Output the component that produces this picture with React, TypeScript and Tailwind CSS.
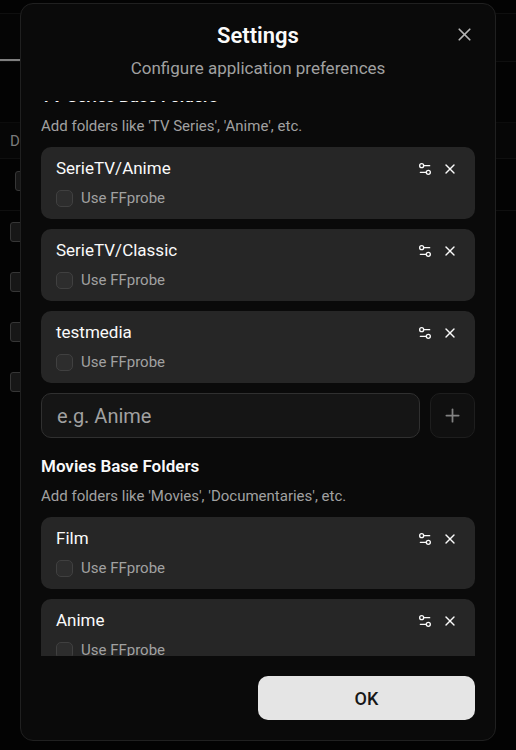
import { useId, useLayoutEffect, useRef } from "react";
import { Plus, Settings2, X } from "lucide-react";

const TV_FOLDERS = ["SerieTV/Anime", "SerieTV/Classic", "testmedia"];
const MOVIE_FOLDERS = ["Film", "Anime"];

function FolderCard({ name }: { name: string }) {
  const id = useId();

  return (
    <div className="rounded-[10px] bg-[#262626] py-[10px] pr-[13px] pl-[15px]">
      <div className="mb-2 flex h-[23px] items-center justify-between">
        <span className="text-[17px] leading-[23px] text-[#fafafa]">{name}</span>
        <div className="flex text-[#fafafa]">
          <button type="button" aria-label={`Configure ${name}`} className="flex size-[25px] items-center justify-center">
            <Settings2 size={16} />
          </button>
          <button type="button" aria-label={`Remove ${name}`} className="flex size-[25px] items-center justify-center">
            <X size={16} />
          </button>
        </div>
      </div>
      <div className="flex items-center gap-2">
        <input
          id={id}
          type="checkbox"
          className="size-[17px] appearance-none rounded-[5px] border border-[#404040] bg-[#2d2d2d] checked:bg-[#e5e5e5]"
        />
        <label htmlFor={id} className="text-[15px] leading-[21px] text-[#a1a1a1]">
          Use FFprobe
        </label>
      </div>
    </div>
  );
}

interface FolderSectionProps {
  title: string;
  hint: string;
  folders: string[];
  placeholder: string;
}

function FolderSection({ title, hint, folders, placeholder }: FolderSectionProps) {
  return (
    <section>
      <h3 className="text-[17px] leading-6 font-semibold text-[#fafafa]">{title}</h3>
      <p className="mt-2 text-[15px] leading-[21px] text-[#a1a1a1]">{hint}</p>
      <div className="mt-[10px] flex flex-col gap-[10px]">
        {folders.map((name) => (
          <FolderCard key={name} name={name} />
        ))}
        <div className="flex gap-[10px]">
          <input
            type="text"
            aria-label={`${title}: new folder`}
            placeholder={placeholder}
            className="h-[45px] min-w-0 flex-1 rounded-[10px] border border-[#303030] bg-[#151515] px-[15px] text-[20px] text-[#fafafa] outline-none placeholder:text-[#a1a1a1]"
          />
          <button
            type="button"
            aria-label="Add folder"
            className="flex size-[45px] items-center justify-center rounded-[10px] border border-[#1e1e1e] bg-[#101010] text-[#828282]"
          >
            <Plus size={21} />
          </button>
        </div>
      </div>
    </section>
  );
}

/** Dimmed file list under the dialog. */
function Backdrop() {
  return (
    <div className="min-h-screen bg-[#030303]">
      <div className="h-[14px] border-b border-[#0f0f0f]" />
      <div className="h-12 border-b border-[#0f0f0f] bg-[#050505]">
        <div className="h-[47px] w-10 border-b-2 border-[#7f7f7f]" />
      </div>
      <div className="h-[61px] border-b border-[#0c0c0c]" />
      <div className="flex h-9 items-center border-b border-[#0f0f0f] bg-[#060606] px-[10px] pt-[2px] text-[15px] text-[#7a7a7a]">
        D
      </div>
      <div className="flex h-[52px] items-center border-b border-[#0f0f0f] px-[15px] pb-2">
        <input type="checkbox" aria-label="Select all" className="h-5 w-5 appearance-none rounded-[3px] border border-[#363636] bg-[#171717]" />
      </div>
      <div className="flex flex-col gap-[30px] px-[10px] pt-[11px]">
        {[1, 2, 3, 4].map((row) => (
          <input
            key={row}
            type="checkbox"
            aria-label={`Select row ${row}`}
            className="h-5 w-5 appearance-none rounded-[3px] border border-[#363636] bg-[#171717]"
          />
        ))}
      </div>
    </div>
  );
}

export default function App() {
  const scroller = useRef<HTMLDivElement>(null);

  useLayoutEffect(() => {
    if (scroller.current) scroller.current.scrollTop = 17;
  }, []);

  return (
    <div className="h-screen overflow-hidden font-[Roboto,sans-serif]">
      <Backdrop />
      <div className="fixed inset-0 flex justify-center px-5 pt-[3px] pb-[9px]">
        <div
          role="dialog"
          aria-labelledby="settings-title"
          className="relative flex w-full flex-col rounded-[13px] border border-[#202020] bg-[#0a0a0a] p-5"
        >
          <header className="mb-5 text-center">
            <h2 id="settings-title" className="text-[22px] leading-[23px] font-semibold text-[#fafafa]">
              Settings
            </h2>
            <p className="mt-[9px] text-[17px] leading-[25px] text-[#a1a1a1]">Configure application preferences</p>
          </header>
          <button type="button" aria-label="Close" className="absolute top-5 right-5 text-[#b5b5b5]">
            <X size={21} />
          </button>

          <div ref={scroller} className="min-h-0 flex-1 overflow-y-auto [scrollbar-width:none]">
            <div className="flex flex-col gap-4">
              <FolderSection
                title="TV Series Base Folders"
                hint="Add folders like 'TV Series', 'Anime', etc."
                folders={TV_FOLDERS}
                placeholder="e.g. Anime"
              />
              <FolderSection
                title="Movies Base Folders"
                hint="Add folders like 'Movies', 'Documentaries', etc."
                folders={MOVIE_FOLDERS}
                placeholder="e.g. Movies"
              />
            </div>
          </div>

          <footer className="mt-5 flex justify-end">
            <button type="button" className="h-11 w-1/2 rounded-[10px] bg-[#e5e5e5] text-[18px] font-medium text-[#171717]">
              OK
            </button>
          </footer>
        </div>
      </div>
    </div>
  );
}
